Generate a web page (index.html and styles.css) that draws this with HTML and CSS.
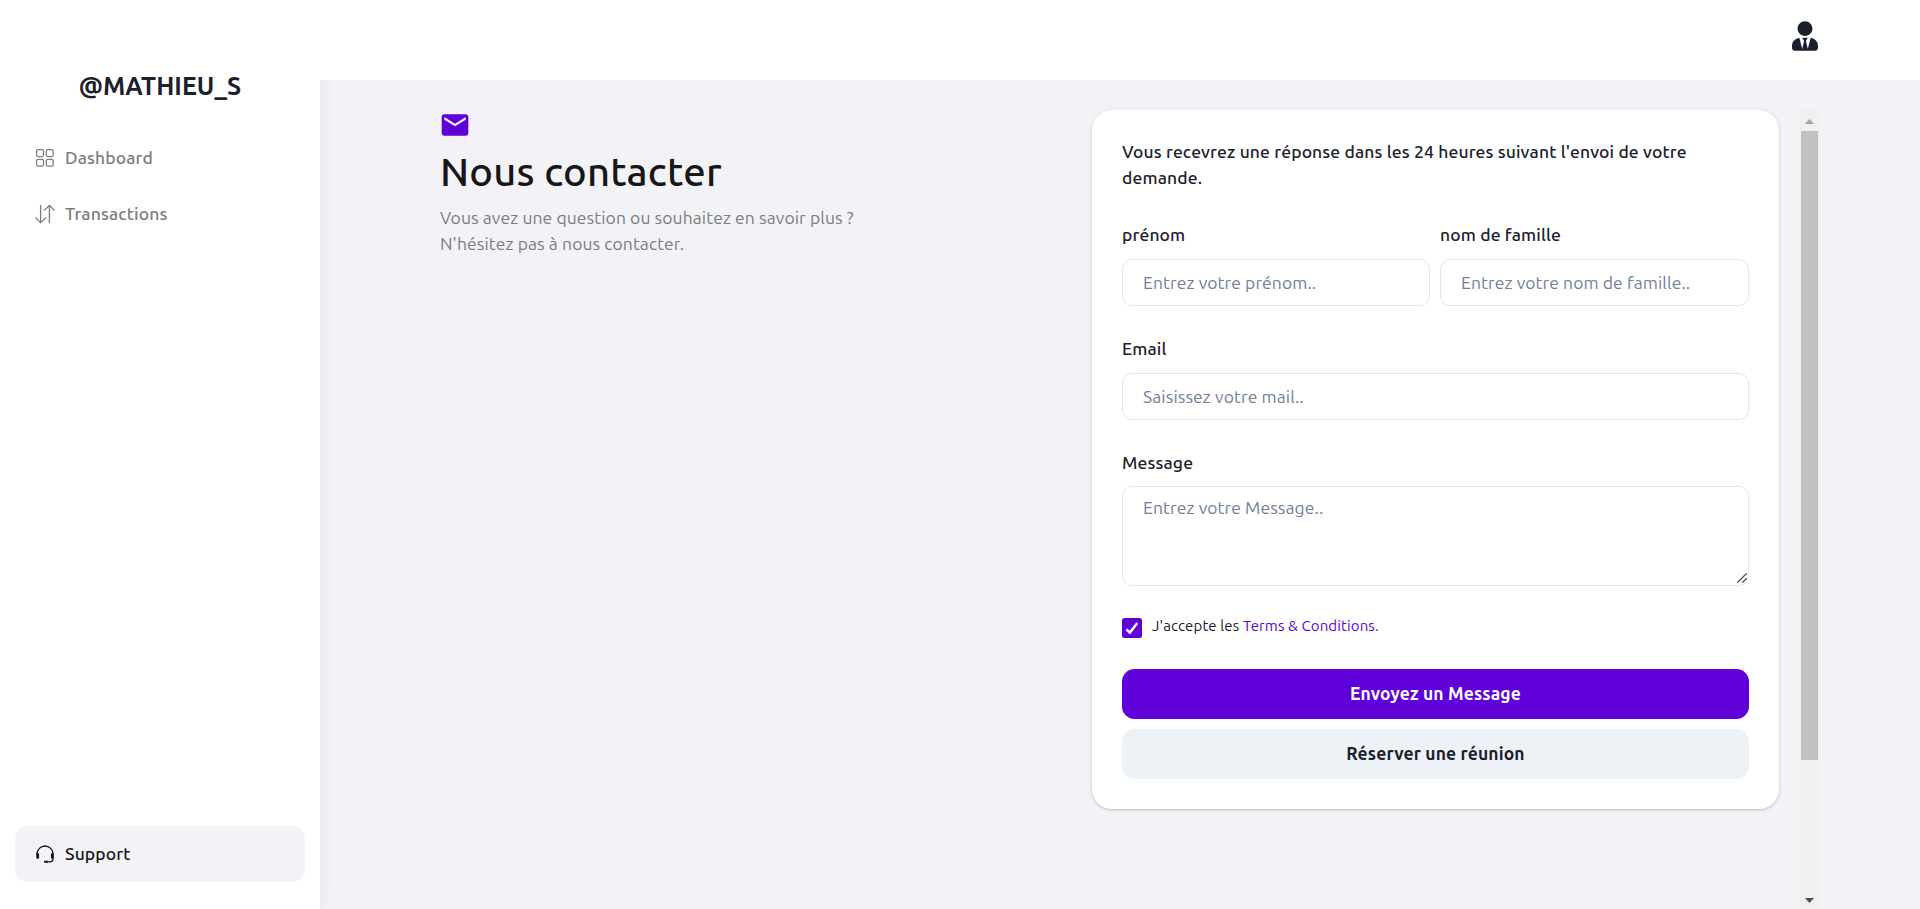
FILE: index.html
```html
<!DOCTYPE html>
<html lang="fr">
<head>
<meta charset="utf-8">
<title>Nous contacter</title>
<link rel="stylesheet" href="styles.css">
</head>
<body>
<div class="app">
  <aside class="sidebar">
    <div>
      <div class="brand">@MATHIEU_S</div>
      <nav class="menu">
        <a class="item">
          <svg class="ico" viewBox="0 0 20 20" fill="none" stroke="currentColor" stroke-width="1.25"><rect x="1.6" y="1.6" width="6.9" height="6.9" rx="1.5"/><rect x="11.3" y="1.6" width="6.9" height="6.9" rx="1.5"/><rect x="1.6" y="11.3" width="6.9" height="6.9" rx="1.5"/><rect x="11.3" y="11.3" width="6.9" height="6.9" rx="1.5"/></svg>
          <span>Dashboard</span>
        </a>
        <a class="item">
          <svg class="ico" viewBox="0 0 20 20" fill="none" stroke="currentColor" stroke-width="1.3"><path d="M5.600 1v17.600M.4 13.500l5.200 5.200 5.200-5.200M14.400 19V1.400M9.200 6.500l5.200-5.200 5.200 5.200"/></svg>
          <span>Transactions</span>
        </a>
      </nav>
    </div>
    <a class="item active">
      <svg class="ico" viewBox="0 0 20 20" fill="none" stroke="currentColor" stroke-width="1.3"><path d="M2 10.500V10a8 8 0 0 1 16 0v4.500a3.300 3.300 0 0 1-3.300 3.300H11"/><path d="M1.300 9.300h1.700a1.100 1.100 0 0 1 1.100 1.100v3.300a1.100 1.100 0 0 1-1.100 1.100h-.6a1.100 1.100 0 0 1-1.100-1.100zM18.700 9.300H17a1.100 1.100 0 0 0-1.100 1.100v3.300a1.100 1.100 0 0 0 1.100 1.100h1.700zM9 16.800h3.800v1.900H9.800a.8.8 0 0 1-.8-.8z" fill="currentColor" stroke="none"/></svg>
      <span>Support</span>
    </a>
  </aside>
  <div class="page">
    <header class="topbar">
      <svg class="avatar" viewBox="0 0 448 512" fill="currentColor"><path d="M224 256c70.7 0 128-57.3 128-128S294.7 0 224 0 96 57.3 96 128s57.3 128 128 128zm95.8 32.6L272 480l-32-136 32-56h-96l32 56-32 136-47.8-191.4C56.9 292 0 350.3 0 422.4V464c0 26.5 21.5 48 48 48h352c26.5 0 48-21.5 48-48v-41.6c0-72.1-56.9-130.4-128.2-133.8z"/></svg>
    </header>
    <main class="main">
      <section class="intro">
        <svg class="mail" viewBox="0 0 24 24" fill="currentColor"><path d="M20 4H4c-1.100 0-1.990.9-1.990 2L2 18c0 1.100.9 2 2 2h16c1.100 0 2-.9 2-2V6c0-1.100-.9-2-2-2zm0 4l-8 5-8-5V6l8 5 8-5v2z"/></svg>
        <h1 class="title">Nous contacter</h1>
        <p class="lead">Vous avez une question ou souhaitez en savoir plus ?<br>N'hésitez pas à nous contacter.</p>
      </section>
      <form class="card">
        <p class="note">Vous recevrez une réponse dans les 24 heures suivant l'envoi de votre<br>demande.</p>
        <div class="row">
          <label class="field"><span class="label">prénom</span><input class="input" placeholder="Entrez votre prénom.."></label>
          <label class="field"><span class="label">nom de famille</span><input class="input" placeholder="Entrez votre nom de famille.."></label>
        </div>
        <label class="field"><span class="label">Email</span><input class="input" placeholder="Saisissez votre mail.."></label>
        <label class="field message"><span class="label">Message</span><textarea class="input area" placeholder="Entrez votre Message.."></textarea>
          <svg class="grip" viewBox="0 0 10 10" fill="none" stroke="#505050" stroke-width="1.3"><path d="M.3 9.700L9.700.3M5.300 9.700l4.400-4.400"/></svg>
        </label>
        <div class="check">
          <span class="box"><svg viewBox="0 0 14 14" fill="none" stroke="currentColor" stroke-width="2.400"><path d="M1.400 8.300l3.500 3.300L12.300 2"/></svg></span>
          <span class="terms">J'accepte les <a class="link">Terms &amp; Conditions.</a></span>
        </div>
        <div class="actions">
          <button type="button" class="btn primary">Envoyez un Message</button>
          <button type="button" class="btn">Réserver une réunion</button>
        </div>
      </form>
      <div class="scroll">
        <svg class="arrow up" viewBox="0 0 9 5" fill="#a3a3a3"><path d="M4.500 0L9 5H0z"/></svg>
        <div class="thumb"></div>
        <svg class="arrow down" viewBox="0 0 9 5" fill="#505050"><path d="M0 0h9L4.500 5z"/></svg>
      </div>
    </main>
  </div>
</div>
</body>
</html>
```
FILE: styles.css
```css
* { box-sizing: border-box; margin: 0; padding: 0; }
body { font-family: "Ubuntu", "Noto Sans", "Open Sans", sans-serif; font-size: 17.5px; letter-spacing: .09px; line-height: 26.25px; color: #1a202c; background: #f3f2f7; }
.app { display: flex; height: 909px; overflow: hidden; }
.sidebar { width: 320px; padding: 70px 15px 27px; background: #fff; display: flex; flex-direction: column; justify-content: space-between; box-shadow: 0 0 15px rgba(0,0,0,.07); clip-path: inset(0 -30px 0 0); }
.brand { height: 60px; text-align: center; font-size: 25px; font-weight: 600; line-height: 32px; }
.item { display: flex; align-items: center; gap: 10px; height: 56px; padding: 0 20px; border-radius: 12.5px; font-weight: 500; letter-spacing: .13px; color: #797e82; }
.item.active { background: #f3f2f7; color: #171717; }
.ico { width: 20px; height: 20px; flex: none; }
.page { flex: 1; display: flex; flex-direction: column; }
.topbar { height: 80px; flex: none; background: #fff; display: flex; justify-content: flex-end; padding: 21px 102px 0 0; margin-left: -10px; z-index: 1; }
.avatar { width: 26px; height: 30px; }
.main { flex: 1; display: flex; padding: 30px 100px 0 120px; }
.intro { width: 652px; flex: none; }
.mail { display: block; width: 32px; height: 32px; margin: -1px 0 1px -1px; color: #5f00d9; }
.title { font-size: 40px; font-weight: 500; letter-spacing: .2px; line-height: 60px; height: 57px; color: #171717; }
.lead { padding-top: 6px; color: #797e82; }
.card { width: 687px; height: 699px; flex: none; margin-right: 20px; padding: 29px 30px 30px; background: #fff; border-radius: 20px; box-shadow: 0 1px 4px rgba(0,0,0,.12), 0 1px 2px rgba(0,0,0,.1); display: flex; flex-direction: column; }
.note { font-weight: 500; letter-spacing: .13px; margin-bottom: 30.5px; }
.row { display: grid; grid-template-columns: 308px 309px; gap: 10px; }
.field { display: flex; flex-direction: column; margin-bottom: 30px; }
.label { font-weight: 500; letter-spacing: .13px; margin-bottom: 10.5px; height: 26.5px; }
.input { width: 100%; height: 47px; border: 1px solid #e2e8f0; border-radius: 10px; padding: 0 20px; font: inherit; letter-spacing: inherit; outline: 0; background: #fff; }
.input::placeholder { color: #718096; opacity: 1; }
.message { position: relative; }
.message .label { margin-bottom: 9.5px; }
.area { height: 100px; padding: 8px 20px; resize: none; display: block; }
.grip { position: absolute; right: 2px; bottom: 3px; width: 10px; height: 10px; }
.check { display: flex; gap: 10px; height: 20px; align-items: center; margin: 2px 0 31px; font-size: 15px; letter-spacing: .11px; }
.box { width: 20px; height: 20px; background: #5f00d9; color: #fff; border-radius: 2.5px; display: grid; place-items: center; }
.box svg { width: 14px; height: 14px; }
.terms { margin-top: -3px; }
.link { color: #5f00d9; }
.actions { display: flex; flex-direction: column; gap: 10px; }
.btn { height: 50px; border: 0; border-radius: 12.5px; background: #edf2f7; color: #1a202c; font: inherit; letter-spacing: .13px; font-weight: 600; }
.primary { background: #5f00d9; color: #fff; font-weight: 700; }
.scroll { width: 21px; height: 799px; background: #f0f0f0; display: flex; flex-direction: column; align-items: center; flex: none; }
.thumb { width: 17px; height: 629px; background: #c1c1c1; }
.arrow { width: 9px; height: 5px; }
.up { margin: 9px 0 7px; }
.down { margin-top: auto; margin-bottom: 6px; }
```
